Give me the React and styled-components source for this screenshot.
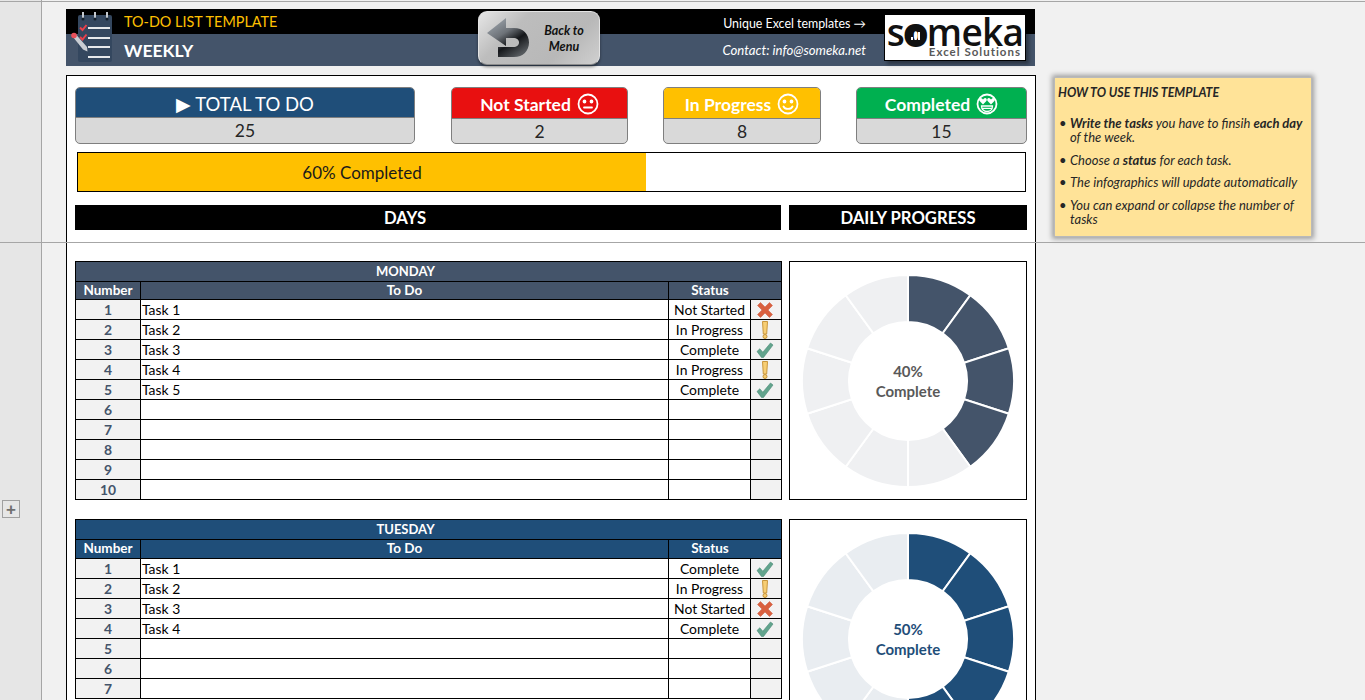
import React from "react";
import styled, { createGlobalStyle } from "styled-components";

const slate = "#44546a";
const navy = "#1f4e79";
const font = `Lato, "Liberation Sans", sans-serif`;

const GlobalStyle = createGlobalStyle`
  html, body {
    margin: 0;
    padding: 0;
    height: 700px;
    overflow: hidden;
    background: #f1f1f1;
    font-family: ${font};
  }
`;

const Page = styled.div`
  position: relative;
  display: flex;
  width: 1365px;
  height: 700px;
  overflow: hidden;
  background: #f1f1f1;
`;
const Gutter = styled.div`
  flex: 0 0 auto;
  box-sizing: content-box;
  padding: 500px 0 0 2px;
  width: 39px;
  background: #e6e6e6;
  border-right: 1px solid #a6a6a6;
`;
const OutlineButton = styled.div`
  display: flex;
  align-items: center;
  justify-content: center;
  box-sizing: border-box;
  width: 18px;
  height: 18px;
  border: 1px solid #a0a0a0;
  color: #707070;
  font: bold 17px/1 "Liberation Sans", sans-serif;
`;
const FreezeLine = styled.div`
  position: absolute;
  left: 0;
  right: 0;
  top: ${({ $top }) => $top}px;
  height: 1px;
  background: #a6a6a6;
`;
const Sheet = styled.div`
  display: flex;
  align-items: flex-start;
  padding: 9px 0 0 24px;
`;
const MainColumn = styled.div`
  display: flex;
  flex-direction: column;
  width: 970px;
`;

/* header band */
const Header = styled.header`
  display: flex;
  height: 57px;
  width: 969px;
  background: linear-gradient(#000 25px, ${slate} 25px);
`;
const BrandIcon = styled.svg`
  flex: 0 0 46px;
  width: 46px;
  height: 57px;
  margin: 0 8px 0 4px;
`;
const TitleColumn = styled.div`
  display: flex;
  flex-direction: column;
  width: 354px;
`;
const Line = styled.div`
  display: flex;
  align-items: center;
  justify-content: ${({ $right }) => ($right ? "flex-end" : "flex-start")};
  height: ${({ $h }) => $h}px;
  color: ${({ $color }) => $color || "#fff"};
  font-size: ${({ $size }) => $size}px;
  font-weight: ${({ $bold }) => ($bold ? 700 : 400)};
  font-style: ${({ $italic }) => ($italic ? "italic" : "normal")};
  white-space: nowrap;
`;
const BackButton = styled.div`
  display: flex;
  align-items: center;
  box-sizing: border-box;
  width: 122px;
  height: 54px;
  margin-top: 2px;
  padding-left: 2px;
  border-radius: 9px;
  border: 1px solid #e4e4e4;
  border-bottom-color: #8c8c8c;
  background: linear-gradient(135deg, #e6e6e6 0%, #bdbdbd 30%, #b8b8b8 70%, #d0d0d0 100%);
  box-shadow: 0 2px 3px rgba(0, 0, 0, 0.45);
`;
const BackLabel = styled.div`
  flex: 1;
  padding: 2px 12px 0 0;
  text-align: center;
  color: #111;
  font-size: 12.5px;
  font-weight: 700;
  font-style: italic;
  line-height: 16px;
`;
const ContactColumn = styled.div`
  display: flex;
  flex: 1;
  flex-direction: column;
  padding-right: 18px;
`;
const LogoBox = styled.div`
  display: flex;
  flex-direction: column;
  align-items: center;
  box-sizing: border-box;
  width: 142px;
  height: 47px;
  margin: 5px 9px 0 0;
  background: #fff;
  border: 1px solid #000;
  box-shadow: 3px 3px 4px rgba(0, 0, 0, 0.4);
`;
const LogoWord = styled.div`
  box-sizing: border-box;
  height: 30px;
  padding-top: 3px;
  color: #111;
  font-family: "Open Sans", sans-serif;
  font-size: 37px;
  line-height: 28px;
  font-weight: 600;
  letter-spacing: -0.7px;
`;
const LogoO = styled.span`
  position: relative;
  display: inline-block;
  font-weight: 800;
  -webkit-text-stroke: 2px #111;
`;
const LogoBars = styled.svg`
  position: absolute;
  left: 7px;
  top: 13px;
  width: 9px;
  height: 9px;
`;
const LogoSub = styled.div`
  align-self: flex-end;
  padding-right: 4px;
  color: #595959;
  font-size: 11.5px;
  line-height: 14px;
  font-weight: 700;
  letter-spacing: 1px;
`;

/* white report panel */
const Panel = styled.main`
  box-sizing: border-box;
  width: 970px;
  margin-top: 9px;
  padding: 11px 8px 0;
  background: #fff;
  border: 1px solid #000;
`;
const KpiRow = styled.div`
  display: grid;
  grid-template-columns: 341px 177px 158px 171px;
  column-gap: 35px;
`;
const Kpi = styled.div`
  display: flex;
  flex-direction: column;
  box-sizing: border-box;
  height: 57px;
  border: 1px solid #7f7f7f;
  border-radius: 5px;
  overflow: hidden;
  background: #d9d9d9;
  &:first-child {
    margin-right: 1px;
  }
`;
const KpiHead = styled.div`
  display: flex;
  align-items: center;
  justify-content: center;
  gap: 6px;
  box-sizing: border-box;
  height: ${({ $h }) => $h || 30}px;
  padding-top: 2px;
  border-bottom: 1px solid #7f7f7f;
  background: ${({ $bg }) => $bg};
  color: #fff;
  font-size: ${({ $size }) => $size || 17.5}px;
  font-weight: ${({ $light }) => ($light ? 400 : 700)};
`;
const KpiValue = styled.div`
  flex: 1;
  display: flex;
  align-items: center;
  justify-content: center;
  color: #262626;
  font-size: 17.5px;
`;
const Face = styled.svg`
  width: 22px;
  height: 22px;
  fill: none;
  stroke: #fff;
  stroke-width: 1.8;
  stroke-linecap: round;
`;
const Bar = styled.div`
  display: flex;
  box-sizing: border-box;
  height: 40px;
  margin: 8px 1px 13px 2px;
  border: 1px solid #000;
`;
const BarFill = styled.div`
  display: flex;
  align-items: center;
  justify-content: center;
  width: ${({ $pct }) => $pct}%;
  background: #ffc000;
  color: #1a1a1a;
  font-size: 17px;
`;
const TwoColumns = styled.div`
  display: grid;
  grid-template-columns: 706px 238px;
  column-gap: 8px;
  align-items: start;
  margin-bottom: ${({ $gap }) => $gap}px;
`;
const SectionHead = styled.div`
  display: flex;
  align-items: center;
  justify-content: center;
  box-sizing: border-box;
  height: 25px;
  padding-right: ${({ $pad }) => $pad || 0}px;
  background: #000;
  color: #fff;
  font-size: 16.7px;
  font-weight: 700;
`;

/* day tables */
const DayTable = styled.table`
  width: 706px;
  table-layout: fixed;
  border-collapse: collapse;
  border: 1px solid #000;
  font-size: 13.9px;
  color: #000;
`;
const Col = styled.col`
  width: ${({ $w }) => $w}px;
`;
const Row = styled.tr`
  height: ${({ $h }) => $h || 20}px;
`;
const HeadCell = styled.th`
  padding: 0 ${({ $pad }) => $pad || 0}px 0 0;
  border: 1px solid #000;
  background: ${({ $bg }) => $bg};
  color: #fff;
  font-size: ${({ $size }) => $size || 13.5}px;
  font-weight: 700;
  line-height: 1;
`;
const NumberCell = styled.td`
  padding: 0;
  border: 1px solid #000;
  background: #f2f2f2;
  color: ${slate};
  font-weight: 700;
  text-align: center;
  line-height: 1;
`;
const TaskCell = styled.td`
  padding: 0 0 0 1px;
  border: 1px solid #000;
  line-height: 1;
`;
const StatusCell = styled.td`
  padding: 0;
  border: 1px solid #000;
  text-align: center;
  line-height: 1;
`;
const IconCell = styled.td`
  padding: 0 2px 0 0;
  border: 1px solid #000;
  background: #f2f2f2;
  text-align: center;
`;
const StatusIcon = styled.svg`
  display: block;
  width: 18px;
  height: 18px;
  margin: 0 auto;
`;
const ChartBox = styled.div`
  position: relative;
  display: flex;
  align-items: center;
  justify-content: center;
  box-sizing: border-box;
  height: 239px;
  border: 1px solid #000;
`;
const ChartLabel = styled.div`
  position: absolute;
  left: 0;
  right: 0;
  top: 50%;
  transform: translateY(-50%);
  text-align: center;
  color: ${({ $color }) => $color};
  font-size: 15px;
  font-weight: 700;
  line-height: 20px;
`;

/* sticky note */
const Note = styled.aside`
  box-sizing: border-box;
  width: 258px;
  height: 160px;
  margin: 68px 0 0 18px;
  padding: 8px 4px 0 3px;
  background: #ffe398;
  border: 1px solid #b9b9b9;
  box-shadow: 0 0 5px 2px rgba(0, 0, 0, 0.35);
  color: #262626;
  font-size: 13px;
  font-style: italic;
  line-height: 14.5px;
`;
const NoteTitle = styled.div`
  font-size: 12.4px;
  font-weight: 700;
  margin-bottom: 15px;
`;
const NoteList = styled.ul`
  margin: 0;
  padding: 0 0 0 12px;
  list-style: none;
`;
const NoteItem = styled.li`
  position: relative;
  margin-bottom: 8px;
  &:before {
    content: "•";
    position: absolute;
    left: -11px;
    font-style: normal;
  }
`;

const FaceNeutral = () => (
  <Face viewBox="0 0 22 22">
    <circle cx="11" cy="11" r="9.500" />
    <circle cx="7.500" cy="8.500" r="1" fill="#fff" />
    <circle cx="14.500" cy="8.500" r="1" fill="#fff" />
    <path d="M7 14.500h8" />
  </Face>
);
const FaceSmile = () => (
  <Face viewBox="0 0 22 22">
    <circle cx="11" cy="11" r="9.500" />
    <circle cx="7.500" cy="8.500" r="1" fill="#fff" />
    <circle cx="14.500" cy="8.500" r="1" fill="#fff" />
    <path d="M6.500 13.500c1.500 3.200 7.500 3.200 9 0" />
  </Face>
);
const FaceHearts = () => (
  <Face viewBox="0 0 22 22">
    <circle cx="11" cy="11" r="9.500" />
    <path d="M7 11.500 3.600 8c-1.400-1.600.9-4 2.600-2.300l.8.8.8-.8c1.700-1.700 4 .7 2.600 2.300z" fill="#fff" stroke="none" />
    <path d="M15 11.500 11.600 8c-1.400-1.600.9-4 2.600-2.300l.8.8.8-.8c1.700-1.700 4 .7 2.600 2.300z" fill="#fff" stroke="none" />
    <path d="M5.500 13h11c0 3.500-2.500 5.500-5.500 5.500S5.500 16.500 5.500 13zM6 15.300h10" strokeWidth="1.300" />
  </Face>
);

const CrossIcon = () => (
  <StatusIcon viewBox="0 0 18 18">
    <path
      d="M4.500 1.500 9 6l4.500-4.500 3 3L12 9l4.500 4.500-3 3L9 12l-4.500 4.500-3-3L6 9 1.500 4.500z"
      fill="#d9603f"
      stroke="#c9553a"
      strokeWidth="0.500"
    />
  </StatusIcon>
);
const WarnIcon = () => (
  <StatusIcon viewBox="0 0 18 18">
    <path d="M6.500 0.500h5l-.8 12.500h-3.400z" fill="#f7ce74" stroke="#c9963c" />
    <circle cx="9" cy="15.500" r="2" fill="#f7ce74" stroke="#c9963c" />
  </StatusIcon>
);
const CheckIcon = () => (
  <StatusIcon viewBox="0 0 18 18">
    <path
      d="M1 10.500 3.800 7.800 6.800 11.200 14.500 2l2.500 2-9.500 12.500H5.500z"
      fill="#62a48d"
      stroke="#4c8a75"
      strokeWidth="0.600"
    />
  </StatusIcon>
);

const statusIcons = {
  "Not Started": CrossIcon,
  "In Progress": WarnIcon,
  Complete: CheckIcon
};

const BrandGlyph = () => (
  <BrandIcon viewBox="0 0 46 57">
    <rect x="8" y="6" width="34" height="47" rx="2" fill="#34475f" />
    <g stroke="#c4c9cf" strokeWidth="2">
      <path d="M13 3v8M25 3v8M37 3v8" />
    </g>
    <g fill="#15202c">
      <circle cx="13" cy="10" r="1.500" />
      <circle cx="25" cy="10" r="1.500" />
      <circle cx="37" cy="10" r="1.500" />
    </g>
    <path d="M10 18.500l2.500 2.500 4-5M10 28l2.500 2.500 4-5" fill="none" stroke="#e8404a" strokeWidth="2" />
    <path d="M18 19h22M18 29h22M18 38h22M18 48h22" stroke="#e6e8eb" strokeWidth="1.800" />
    <path d="M3 28l3-2.500L17 38 17.500 42.500 13 40.500z" fill="#c9cdd3" />
    <circle cx="4" cy="26.500" r="2.800" fill="#e8505a" />
  </BrandIcon>
);

const UndoArrow = () => (
  <svg width="60" height="52" viewBox="0 0 60 52">
    <defs>
      <linearGradient id="undoFill" x1="0" y1="0" x2="0.700" y2="1">
        <stop offset="0" stopColor="#aab2ba" />
        <stop offset="0.450" stopColor="#6d7278" />
        <stop offset="0.700" stopColor="#15171a" />
        <stop offset="1" stopColor="#55595d" />
      </linearGradient>
    </defs>
    <path
      d="M6 21 25 6v10h8c9 0 15 6 15 14.500S42 45 33 45H17V35h15c4 0 6-2 6-4.500S36 26 32 26H25v8z"
      fill="url(#undoFill)"
    />
  </svg>
);

const segment = (i, count, cx, cy, R, r) => {
  const a0 = (i / count) * 2 * Math.PI - Math.PI / 2;
  const a1 = ((i + 1) / count) * 2 * Math.PI - Math.PI / 2;
  const p = (rad, a) => `${(cx + rad * Math.cos(a)).toFixed(2)} ${(cy + rad * Math.sin(a)).toFixed(2)}`;
  return `M${p(R, a0)}A${R} ${R} 0 0 1 ${p(R, a1)}L${p(r, a1)}A${r} ${r} 0 0 0 ${p(r, a0)}Z`;
};

const Donut = ({ pct, color, rest, textColor }) => (
  <ChartBox>
    <svg width="214" height="214" viewBox="0 0 214 214">
      {Array.from({ length: 10 }, (_, i) => (
        <path
          key={i}
          d={segment(i, 10, 107, 107, 106, 59)}
          fill={i < pct / 10 ? color : rest}
          stroke="#fff"
          strokeWidth="2"
        />
      ))}
    </svg>
    <ChartLabel $color={textColor}>
      {pct}%
      <br />
      Complete
    </ChartLabel>
  </ChartBox>
);

const DayBlock = ({ name, color, headH, rows, tasks }) => (
  <DayTable>
    <colgroup>
      <Col $w={65} />
      <Col $w={528} />
      <Col $w={82} />
      <Col $w={31} />
    </colgroup>
    <thead>
      <Row>
        <HeadCell colSpan={4} $bg={color} $pad={46} $size={13}>
          {name}
        </HeadCell>
      </Row>
      <Row $h={headH}>
        <HeadCell $bg={color}>Number</HeadCell>
        <HeadCell $bg={color}>To Do</HeadCell>
        <HeadCell colSpan={2} $bg={color} $pad={30}>
          Status
        </HeadCell>
      </Row>
    </thead>
    <tbody>
      {Array.from({ length: rows }, (_, i) => {
        const status = tasks[i];
        const Icon = statusIcons[status];
        return (
          <Row key={i}>
            <NumberCell>{i + 1}</NumberCell>
            <TaskCell>{status ? `Task ${i + 1}` : ""}</TaskCell>
            <StatusCell>{status}</StatusCell>
            <IconCell>{Icon && <Icon />}</IconCell>
          </Row>
        );
      })}
    </tbody>
  </DayTable>
);

const monday = ["Not Started", "In Progress", "Complete", "In Progress", "Complete"];
const tuesday = ["Complete", "In Progress", "Not Started", "Complete"];

export default function App() {
  return (
    <Page>
      <GlobalStyle />
      <FreezeLine $top={1} />
      <FreezeLine $top={242} />
      <Gutter>
        <OutlineButton>+</OutlineButton>
      </Gutter>
      <Sheet>
        <MainColumn>
          <Header>
            <BrandGlyph />
            <TitleColumn>
              <Line $h={25} $size={14.4} $color="#ffc000">
                TO-DO LIST TEMPLATE
              </Line>
              <Line $h={32} $size={17.5} $bold>
                WEEKLY
              </Line>
            </TitleColumn>
            <BackButton>
              <UndoArrow />
              <BackLabel>
                Back to
                <br />
                Menu
              </BackLabel>
            </BackButton>
            <ContactColumn>
              <Line $h={28} $size={12.4} $right>
                Unique Excel templates →
              </Line>
              <Line $h={25} $size={13.2} $italic $right>
                Contact: info@someka.net
              </Line>
            </ContactColumn>
            <LogoBox>
              <LogoWord>
                s
                <LogoO>
                  o
                  <LogoBars viewBox="0 0 9 9">
                    <path d="M0 6h2v3H0zM3.500 4h2v5h-2zM7 1h2v8H7z" fill="#fff" />
                  </LogoBars>
                </LogoO>
                meka
              </LogoWord>
              <LogoSub>Excel Solutions</LogoSub>
            </LogoBox>
          </Header>
          <Panel>
            <KpiRow>
              <Kpi>
                <KpiHead $bg={navy} $size={18.5} $light>
                  ▶ TOTAL TO DO
                </KpiHead>
                <KpiValue>25</KpiValue>
              </Kpi>
              <Kpi>
                <KpiHead $bg="#e81010" $h={31}>
                  Not Started <FaceNeutral />
                </KpiHead>
                <KpiValue>2</KpiValue>
              </Kpi>
              <Kpi>
                <KpiHead $bg="#ffc000" $h={31}>
                  In Progress <FaceSmile />
                </KpiHead>
                <KpiValue>8</KpiValue>
              </Kpi>
              <Kpi>
                <KpiHead $bg="#00b050" $h={31}>
                  Completed <FaceHearts />
                </KpiHead>
                <KpiValue>15</KpiValue>
              </Kpi>
            </KpiRow>
            <Bar>
              <BarFill $pct={60}>60% Completed</BarFill>
            </Bar>
            <TwoColumns $gap={31}>
              <SectionHead $pad={46}>DAYS</SectionHead>
              <SectionHead>DAILY PROGRESS</SectionHead>
            </TwoColumns>
            <TwoColumns $gap={19}>
              <DayBlock name="MONDAY" color={slate} headH={18} rows={10} tasks={monday} />
              <Donut pct={40} color={slate} rest="#eff0f2" textColor="#595959" />
            </TwoColumns>
            <TwoColumns $gap={0}>
              <DayBlock name="TUESDAY" color={navy} headH={19} rows={7} tasks={tuesday} />
              <Donut pct={50} color={navy} rest="#e9edf1" textColor={navy} />
            </TwoColumns>
          </Panel>
        </MainColumn>
        <Note>
          <NoteTitle>HOW TO USE THIS TEMPLATE</NoteTitle>
          <NoteList>
            <NoteItem>
              <b>Write the tasks</b> you have to finsih <b>each day</b> of the week.
            </NoteItem>
            <NoteItem>
              Choose a <b>status</b> for each task.
            </NoteItem>
            <NoteItem>The infographics will update automatically</NoteItem>
            <NoteItem>You can expand or collapse the number of tasks</NoteItem>
          </NoteList>
        </Note>
      </Sheet>
    </Page>
  );
}
